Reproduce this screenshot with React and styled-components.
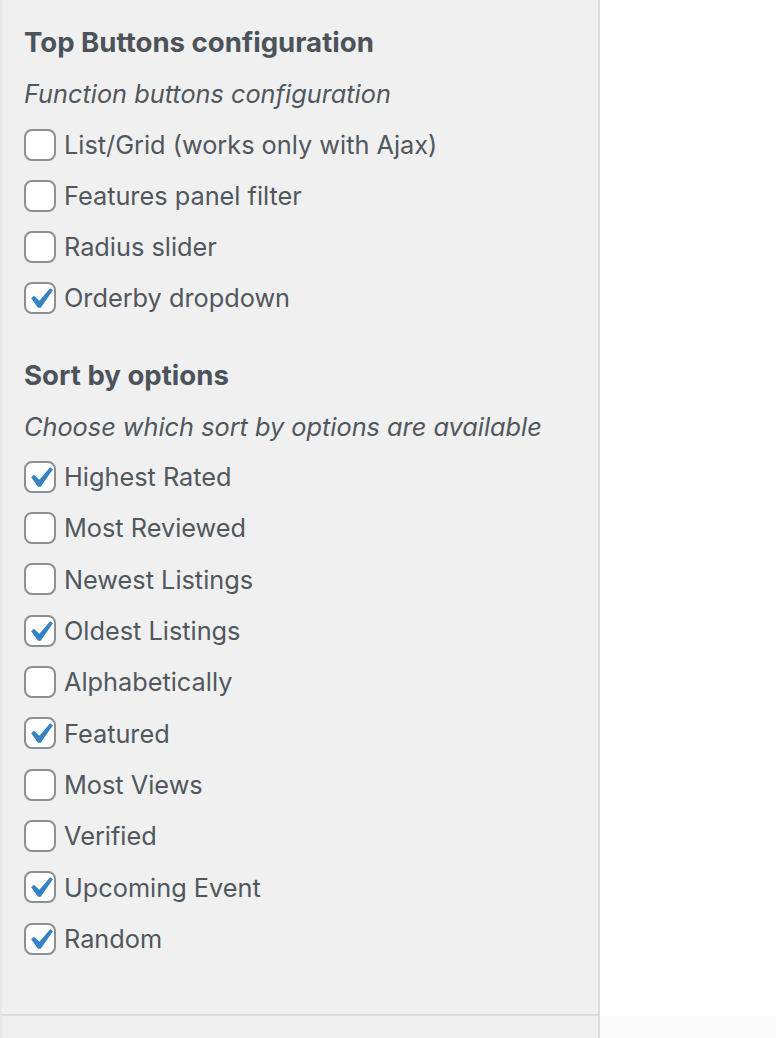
import React from "react"
import { styled, createGlobalStyle } from "styled-components"

const GlobalStyle = createGlobalStyle`
    html, body {
        margin: 0;
        padding: 0;
        background: #fff;
    }

    body {
        font-family: Inter, "Noto Sans", "Liberation Sans", sans-serif;
        color: #50575e;
    }
`

const Page = styled.div`
    display: flex;
    width: 776px;
    height: 1038px;
    overflow: hidden;
`

const Sidebar = styled.div`
    width: 596px;
    background-color: #f0f0f0;
    border-left: 2px solid #e6e6e6;
    border-right: 2px solid #dcdcde;
    display: flex;
    flex-direction: column;
`

const Panel = styled.div`
    height: 1016px;
    box-sizing: border-box;
    padding: 17px 0 0 22px;
    border-bottom: 2px solid #dcdcde;
`

const Main = styled.div`
    flex: 1;
    background: linear-gradient(to bottom, #fff 1016px, #fbfbfb 1016px);
`

const Section = styled.section`
    & + & {
        margin-top: 27px;
    }
`

const Heading = styled.h3`
    margin: 0;
    height: 51px;
    line-height: 51px;
    font-size: 27.6px;
    font-weight: 700;
    color: #4c535a;
`

const Description = styled.p`
    margin: 0 0 ${({ $tight }) => ($tight ? "-1px" : "0")};
    height: 51px;
    line-height: 51px;
    font-size: 25.3px;
    font-style: italic;
    color: #50575e;
`

const Row = styled.label`
    display: flex;
    align-items: center;
    gap: 8px;
    height: ${({ $pitch }) => $pitch}px;
    font-size: 25.3px;
    color: #50575e;
`

const Box = styled.span`
    width: 32px;
    height: 32px;
    box-sizing: border-box;
    border: 2px solid #8c8f94;
    border-radius: 8px;
    background: #fff;
    display: flex;
    align-items: center;
    justify-content: center;
    flex-shrink: 0;
    overflow: visible;

    svg {
        flex-shrink: 0;
        margin: 1px -6px -1px;
    }
`

function Check() {
    return (
        <svg width="42" height="42" viewBox="0 0 20 20">
            <path d="M14.83 4.89l1.34.94-5.81 8.38H9.02L5.78 9.67l1.34-1.25 2.57 2.4z" fill="#3582c4" />
        </svg>
    )
}

function Option({ label, checked, pitch }) {
    return (
        <Row $pitch={pitch}>
            <Box>{checked ? <Check /> : null}</Box>
            <span>{label}</span>
        </Row>
    )
}

const topButtons = [
    { label: "List/Grid (works only with Ajax)", checked: false },
    { label: "Features panel filter", checked: false },
    { label: "Radius slider", checked: false },
    { label: "Orderby dropdown", checked: true },
]

const sortOptions = [
    { label: "Highest Rated", checked: true },
    { label: "Most Reviewed", checked: false },
    { label: "Newest Listings", checked: false },
    { label: "Oldest Listings", checked: true },
    { label: "Alphabetically", checked: false },
    { label: "Featured", checked: true },
    { label: "Most Views", checked: false },
    { label: "Verified", checked: false },
    { label: "Upcoming Event", checked: true },
    { label: "Random", checked: true },
]

export default function App() {
    return (
        <>
            <GlobalStyle />
            <Page>
                <Sidebar>
                    <Panel>
                        <Section>
                            <Heading>Top Buttons configuration</Heading>
                            <Description>Function buttons configuration</Description>
                            {topButtons.map((o) => (
                                <Option key={o.label} {...o} pitch={51} />
                            ))}
                        </Section>
                        <Section>
                            <Heading>Sort by options</Heading>
                            <Description $tight>Choose which sort by options are available</Description>
                            {sortOptions.map((o) => (
                                <Option key={o.label} {...o} pitch={51.33} />
                            ))}
                        </Section>
                    </Panel>
                </Sidebar>
                <Main />
            </Page>
        </>
    )
}
